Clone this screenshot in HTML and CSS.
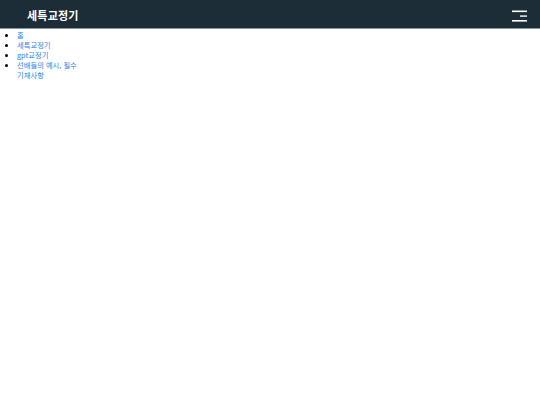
FILE: index.html
```html
<!DOCTYPE html>
<html lang="ko">
<head>
<meta charset="utf-8">
<title>세특교정기</title>
<link rel="stylesheet" href="styles.css">
</head>
<body>
<header class="topbar">
  <div class="brand">세특교정기</div>
  <button class="menu-btn" aria-label="menu">
    <svg width="16" height="12" viewBox="0 0 16 12">
      <rect x="0" y="0.5" width="15" height="1.6" fill="#ffffff"/>
      <rect x="8" y="5.3" width="7" height="1.6" fill="#d8e4ea"/>
      <rect x="0" y="10" width="15" height="1.6" fill="#ffffff"/>
    </svg>
  </button>
</header>
<ul class="nav">
  <li><a href="#">홈</a></li>
  <li><a href="#">세특교정기</a></li>
  <li><a href="#">gpt교정기</a></li>
  <li><a href="#">선배들의 예시, 필수 기재사항</a></li>
</ul>
</body>
</html>
```
FILE: styles.css
```css
html, body {
  margin: 0;
  padding: 0;
  background: #ffffff;
}
body {
  font-family: "Noto Sans CJK KR", "Noto Sans", sans-serif;
}
.topbar {
  height: 28px;
  background: #1c2d37;
  border-bottom: 1px solid #8796a0;
  display: flex;
  align-items: center;
  justify-content: space-between;
  padding: 0 12px 0 27px;
}
.brand {
  color: #ffffff;
  font-size: 11px;
  font-weight: 700;
  letter-spacing: 0.2px;
  margin-top: 1px;
}
.menu-btn {
  background: none;
  border: 0;
  padding: 0;
  margin-top: 3px;
  display: flex;
}
.nav {
  margin: 0;
  padding: 1px 0 0 17px;
  width: 64px;
  font-size: 7.3px;
  line-height: 10px;
  color: #000;
}
.nav li {
  list-style: disc;
}
.nav a {
  color: #2a86e6;
  text-decoration: none;
}
```
